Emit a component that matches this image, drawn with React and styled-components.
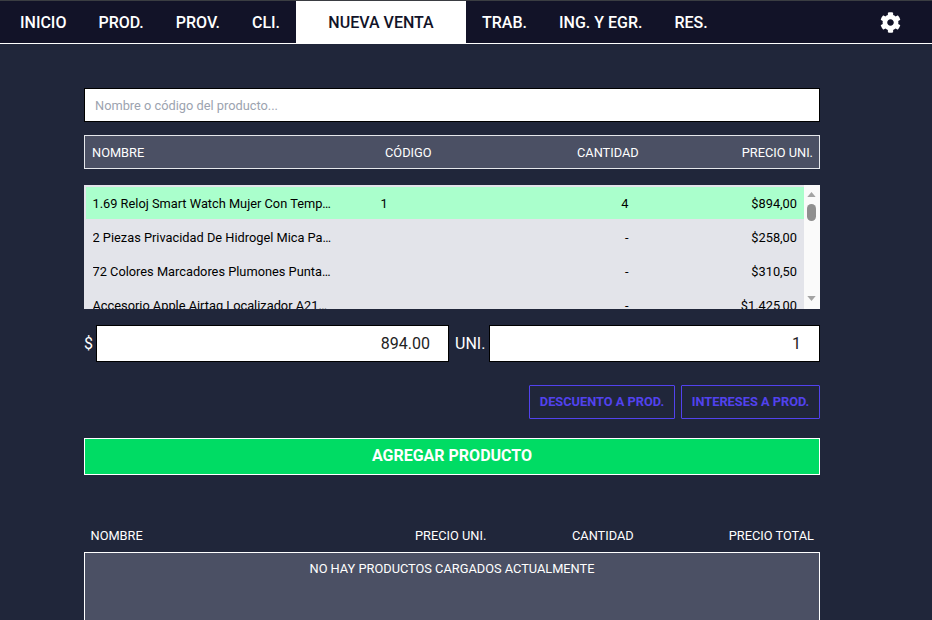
import React from "react";
import styled, { createGlobalStyle } from "styled-components";
import { FaCog } from "react-icons/fa";

const Global = createGlobalStyle`
  html, body { margin: 0; padding: 0; height: 620px; overflow: hidden; background: #20263a; }
  body { font-family: Roboto, "Liberation Sans", sans-serif; }
  * { box-sizing: border-box; }
`;
const Page = styled.div`width: 932px; height: 620px; overflow: hidden; background: #20263a;`;
const Nav = styled.nav`
  display: flex; align-items: stretch; height: 44px; padding-left: 4px;
  background: #121328; border-top: 1px solid #3a3d42; border-bottom: 1px solid #fff;
`;
const NavItem = styled.div`
  display: flex; align-items: center; justify-content: center; padding: 0 16px;
  font-size: 16px; font-weight: 500; color: ${p => p.$active ? "#121328" : "#fff"};
  background: ${p => p.$active ? "#fff" : "transparent"};
  width: ${p => p.$active ? "170px" : "auto"};
`;
const Gear = styled.div`
  margin-left: auto; width: 84px; display: flex; align-items: center; justify-content: center; color: #fff;
`;
const Main = styled.main`
  display: flex; flex-direction: column; width: 736px; margin-left: 84px; padding-top: 44px;
`;
const Search = styled.div`
  height: 34px; background: #fff; border: 1px solid #000; padding: 0 10px;
  display: flex; align-items: center; font-size: 12.8px; color: #9ca3af;
`;
const HeadBar = styled.div`
  display: flex; align-items: center; height: 34px; margin-top: 13px; padding-top: 1px;
  background: #4b5064; border: 1px solid #e5e7eb; color: #fff; font-size: 12.8px;
`;
const HeadCell = styled.span`
  flex: none; width: ${p => p.$w}px; text-align: ${p => p.$align || "left"};
  padding-left: ${p => p.$pl || 0}px; padding-right: ${p => p.$pr || 0}px;
`;
const ListBox = styled.div`
  display: flex; height: 124px; margin-top: 16px; background: #e3e4ea; overflow: hidden;
`;
const Rows = styled.div`flex: 1; padding: 2px 0 0 2px; overflow: hidden;`;
const Row = styled.div`
  display: flex; align-items: center; height: 32px; margin-bottom: 2px;
  font-size: 12.8px; color: #000;
  background: ${p => p.$on ? "#aaffcc" : "transparent"};
`;
const NameCell = styled.span`
  width: 238px; margin-left: 6.5px; flex: none; overflow: hidden; white-space: nowrap;
`;
const CodeCell = styled.span`width: 50px; margin-left: 50px; flex: none;`;
const QtyCell = styled.span`width: 120px; margin-left: 78px; flex: none; text-align: right;`;
const PriceCell = styled.span`flex: 1; text-align: right; padding-right: 7px;`;
const Scroll = styled.div`flex: 0 0 16px; position: relative; background: #fafafa;`;
const Thumb = styled.div`
  position: absolute; top: 19px; left: 3px; width: 9px; height: 17px; border-radius: 5px; background: #8f8f8f;
`;
const Arrow = styled.svg`
  position: absolute; left: 3px; width: 9px; height: 5px; fill: #a3a3a3;
  ${p => p.$down ? "bottom: 8px;" : "top: 7px;"}
`;
const PriceRow = styled.div`
  display: flex; align-items: center; height: 37px; margin-top: 16px; color: #fff; font-size: 16px;
`;
const Unit = styled.span`flex: none; width: ${p => p.$w}px; padding-left: ${p => p.$pl || 0}px;`;
const NumBox = styled.div`
  width: ${p => p.$w}px; height: 37px; background: #fff; border: 1px solid #000; color: #222;
  display: flex; align-items: center; justify-content: flex-end; padding-right: 18px; font-size: 16px;
`;
const Actions = styled.div`display: flex; justify-content: flex-end; gap: 6px; margin-top: 23px;`;
const Ghost = styled.div`
  display: flex; align-items: center; justify-content: center; width: ${p => p.$w}px; height: 34px;
  padding-bottom: 2px; border: 1px solid #5242ee; border-radius: 1px; color: #5242ee;
  font-size: 12.8px; font-weight: 700;
`;
const AddBtn = styled.div`
  height: 37px; margin-top: 19px; padding-bottom: 2px; background: #00dc64; border: 1px solid #fff; color: #fff;
  display: flex; align-items: center; justify-content: center; font-size: 16px; font-weight: 700;
`;
const CartHead = styled.div`
  display: flex; align-items: center; height: 18px; margin-top: 51px; color: #fff; font-size: 12.8px;
`;
const CartBox = styled.div`
  height: 120px; margin-top: 8px; background: #4b5064; border: 1px solid #fff; color: #fff;
  font-size: 12.8px; text-align: center; padding-top: 8px;
`;

const items = [
  ["1.69 Reloj Smart Watch Mujer Con Temp…", "1", "4", "$894,00", true],
  ["2 Piezas Privacidad De Hidrogel Mica Pa…", "", "-", "$258,00"],
  ["72 Colores Marcadores Plumones Punta…", "", "-", "$310,50"],
  ["Accesorio Apple Airtag Localizador A21…", "", "-", "$1.425,00"],
];

export default function App() {
  return (
    <Page>
      <Global />
      <Nav>
        {["INICIO", "PROD.", "PROV.", "CLI."].map(t => <NavItem key={t}>{t}</NavItem>)}
        <NavItem $active>NUEVA VENTA</NavItem>
        {["TRAB.", "ING. Y EGR.", "RES."].map(t => <NavItem key={t}>{t}</NavItem>)}
        <Gear><FaCog size={21} /></Gear>
      </Nav>
      <Main>
        <Search>Nombre o código del producto...</Search>
        <HeadBar>
          <HeadCell $w={300} $pl={7}>NOMBRE</HeadCell>
          <HeadCell $w={100}>CÓDIGO</HeadCell>
          <HeadCell $w={192} $pl={92}>CANTIDAD</HeadCell>
          <HeadCell $w={142} $align="right" $pr={6}>PRECIO UNI.</HeadCell>
        </HeadBar>
        <ListBox>
          <Rows>
            {items.map(([n, c, q, p, on]) => (
              <Row key={n} $on={on}>
                <NameCell>{n}</NameCell>
                <CodeCell>{c}</CodeCell>
                <QtyCell>{q}</QtyCell>
                <PriceCell>{p}</PriceCell>
              </Row>
            ))}
          </Rows>
          <Scroll>
            <Arrow viewBox="0 0 10 6"><path d="M5 0 L10 6 L0 6 Z" /></Arrow>
            <Thumb />
            <Arrow $down viewBox="0 0 10 6"><path d="M0 0 L10 0 L5 6 Z" /></Arrow>
          </Scroll>
        </ListBox>
        <PriceRow>
          <Unit $w={12}>$</Unit>
          <NumBox $w={353}>894.00</NumBox>
          <Unit $w={40} $pl={6}>UNI.</Unit>
          <NumBox $w={331}>1</NumBox>
        </PriceRow>
        <Actions>
          <Ghost $w={146}>DESCUENTO A PROD.</Ghost>
          <Ghost $w={139}>INTERESES A PROD.</Ghost>
        </Actions>
        <AddBtn>AGREGAR PRODUCTO</AddBtn>
        <CartHead>
          <HeadCell $w={300} $pl={6.5}>NOMBRE</HeadCell>
          <HeadCell $w={132} $pl={31}>PRECIO UNI.</HeadCell>
          <HeadCell $w={160} $pl={56}>CANTIDAD</HeadCell>
          <HeadCell $w={138} $align="right">PRECIO TOTAL</HeadCell>
        </CartHead>
        <CartBox>NO HAY PRODUCTOS CARGADOS ACTUALMENTE</CartBox>
      </Main>
    </Page>
  );
}
